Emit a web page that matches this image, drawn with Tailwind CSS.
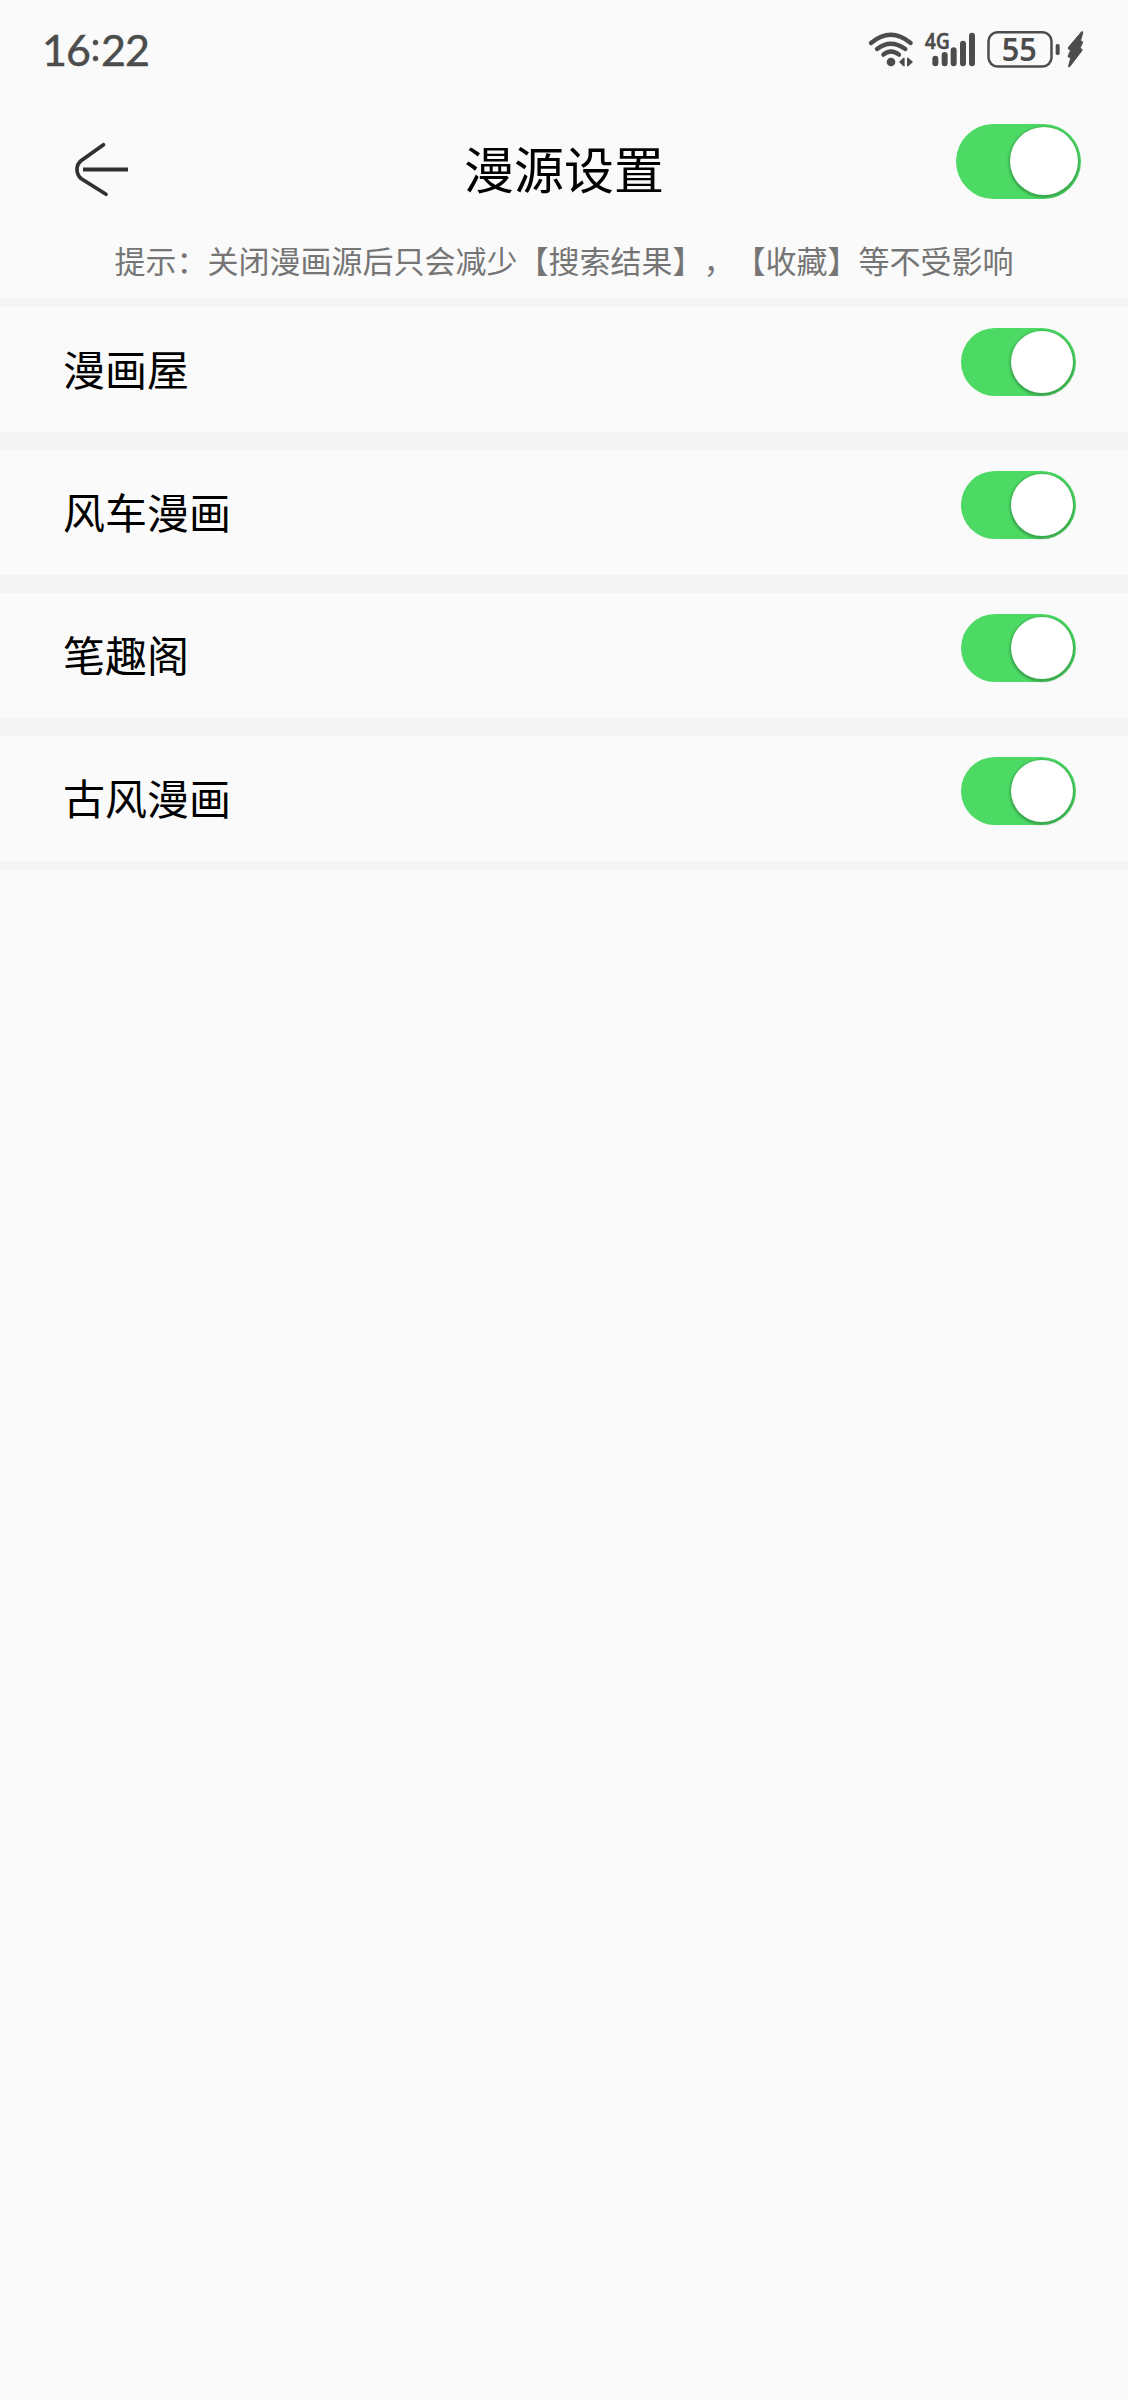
<!DOCTYPE html>
<html lang="zh-CN">
<head>
<meta charset="utf-8">
<title>漫源设置</title>
<script src="https://cdn.jsdelivr.net/npm/@tailwindcss/browser@4"></script>
</head>
<body class="min-h-[2400px] w-[1128px] bg-[#fafafa] font-['Noto_Sans_CJK_SC',sans-serif] text-black">
  <!-- status bar -->
  <div class="flex h-[100px] items-start justify-between pr-[18px] pl-[42px] text-[#4c4c4c]">
    <div class="flex pt-[24px]">
      <svg class="h-[60px] w-[110px]" viewBox="0 0 110 60" fill="#4c4c4c" font-family="Lato, sans-serif" font-size="43" font-weight="400" stroke="#4c4c4c" stroke-width=".5">
        <text x="0" y="41.500">1</text><text x="24" y="41.500">6</text><text x="59" y="41.500">2</text><text x="83" y="41.500">2</text>
        <circle cx="53.500" cy="18.500" r="2.500"/><circle cx="53.500" cy="34.500" r="2.500"/>
      </svg>
    </div>
    <div class="flex pt-[15px]">
      <!-- wifi and mobile signal -->
      <svg class="h-[70px] w-[120px]" viewBox="0 0 360 210" fill="none" stroke="#4c4c4c" stroke-linecap="round">
        <path stroke-width="13" d="M33 84Q92 35 152 84M51 102Q92 70 136 102M70 119Q93 100 117 119"/>
        <circle cx="93" cy="141" r="13" fill="#4c4c4c" stroke="none"/>
        <path d="M117 141L130 128H134V154H130ZM159 141L145 128H141V154H145Z" fill="#4c4c4c" stroke="none"/>
        <text x="194" y="102" font-family="Noto Sans, sans-serif" font-weight="600" font-size="67" textLength="76" lengthAdjust="spacingAndGlyphs" fill="#4c4c4c" stroke="#4c4c4c" stroke-width="1">4G</text>
        <path stroke-width="18" d="M226 131V145M254 120V145M281 106V145M309 86V145M336 62V145"/>
      </svg>
      <!-- battery -->
      <svg class="h-[70px] w-[130px]" viewBox="0 0 390 210" fill="#4c4c4c">
        <rect x="25.500" y="51.500" width="189" height="103" rx="27" fill="none" stroke="#4c4c4c" stroke-width="7.500"/>
        <text x="65" y="138" font-family="Noto Sans, sans-serif" font-weight="600" font-size="95" textLength="105" lengthAdjust="spacingAndGlyphs">55</text>
        <rect x="227" y="87" width="12" height="33" rx="5"/>
        <path stroke="#4c4c4c" stroke-width="3" stroke-linejoin="round" d="M305 50Q309 49 308 54L301 79H306Q309 81 307 85L299 101H304Q308 103 305 108L269 155Q265 158 266 152L273 127H266Q263 124 266 119L273 104H267Q263 101 266 96Z"/>
      </svg>
    </div>
  </div>

  <!-- title bar -->
  <header class="flex h-[130px] items-start justify-between pr-[47px] pl-[70px]">
    <svg class="mt-[38px] h-[62px] w-[172px]" viewBox="0 0 172 62" fill="none" stroke="#303030">
      <path stroke-width="3.700" stroke-linecap="round" d="M33.500 6.700L11 22.700Q7 26 7 31.300Q7 37 11 40.500L36 56.300"/>
      <path stroke-width="4" d="M13 31.500H58"/>
    </svg>
    <h1 class="mt-[31px] mr-[70px] text-[50px] leading-[72px] font-normal">漫源设置</h1>
    <div class="mt-6 flex h-[75px] w-[125px] justify-end rounded-full bg-[#4cd964] pt-[3px] pr-[3.5px]">
      <div class="size-[68px] rounded-full bg-white shadow-[0_3px_2px_rgba(0,0,0,0.08),0_1px_2px_2px_rgba(0,0,0,0.16)]"></div>
    </div>
  </header>
  <p class="h-[68px] pt-[7px] text-center text-[31px] leading-[45px] whitespace-nowrap text-[#757575] [font-kerning:none] [text-spacing-trim:space-all]">提示：关闭漫画源后只会减少【搜索结果】，【收藏】等不受影响</p>

  <!-- sources -->
  <ul class="border-y-[9px] border-[#f4f4f4] [&>li+li]:border-t-[18px] [&>li+li]:border-[#f4f4f4]">
    <li><div class="flex h-[125px] items-start justify-between pt-[21px] pr-[52px] pl-[63px]">
      <span class="pt-[10px] text-[42px] leading-[60px]">漫画屋</span>
      <div class="flex h-[68px] w-[115px] justify-end rounded-full bg-[#4cd964] pt-[3px] pr-[3.5px]"><div class="size-[62px] rounded-full bg-white shadow-[0_3px_2px_rgba(0,0,0,0.08),0_1px_2px_2px_rgba(0,0,0,0.16)]"></div></div>
    </div></li>
    <li><div class="flex h-[125px] items-start justify-between pt-[21px] pr-[52px] pl-[63px]">
      <span class="pt-[10px] text-[42px] leading-[60px]">风车漫画</span>
      <div class="flex h-[68px] w-[115px] justify-end rounded-full bg-[#4cd964] pt-[3px] pr-[3.5px]"><div class="size-[62px] rounded-full bg-white shadow-[0_3px_2px_rgba(0,0,0,0.08),0_1px_2px_2px_rgba(0,0,0,0.16)]"></div></div>
    </div></li>
    <li><div class="flex h-[125px] items-start justify-between pt-[21px] pr-[52px] pl-[63px]">
      <span class="pt-[10px] text-[42px] leading-[60px]">笔趣阁</span>
      <div class="flex h-[68px] w-[115px] justify-end rounded-full bg-[#4cd964] pt-[3px] pr-[3.5px]"><div class="size-[62px] rounded-full bg-white shadow-[0_3px_2px_rgba(0,0,0,0.08),0_1px_2px_2px_rgba(0,0,0,0.16)]"></div></div>
    </div></li>
    <li><div class="flex h-[125px] items-start justify-between pt-[21px] pr-[52px] pl-[63px]">
      <span class="pt-[10px] text-[42px] leading-[60px]">古风漫画</span>
      <div class="flex h-[68px] w-[115px] justify-end rounded-full bg-[#4cd964] pt-[3px] pr-[3.5px]"><div class="size-[62px] rounded-full bg-white shadow-[0_3px_2px_rgba(0,0,0,0.08),0_1px_2px_2px_rgba(0,0,0,0.16)]"></div></div>
    </div></li>
  </ul>
</body>
</html>
